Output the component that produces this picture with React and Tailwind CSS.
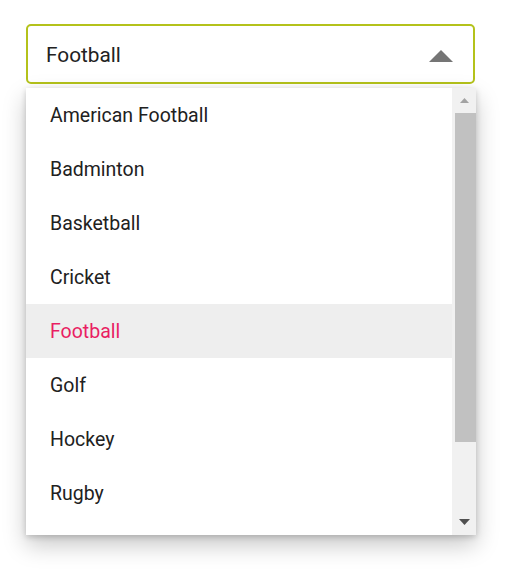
import React from 'react';

const sports = ['American Football', 'Badminton', 'Basketball', 'Cricket', 'Football', 'Golf', 'Hockey', 'Rugby'];

export default function App() {
  const selected = 'Football';

  return (
    <div className="w-[508px] h-[577px] bg-white font-['Roboto',sans-serif] pt-6 pl-[26px]">
      {/* Input */}
      <div className="w-[449px] h-[60px] border-2 border-[#b4c21b] rounded-[5px] flex items-center pl-[18px] pr-5 justify-between">
        <span className="text-[20.8px] text-[#222] mt-[3px]">{selected}</span>
        <svg width="24" height="12" viewBox="0 0 24 12" className="mt-[3px]">
          <polygon points="0,12 12,0 24,12" fill="#757575" />
        </svg>
      </div>

      {/* Popup */}
      <div className="mt-1 w-[450px] h-[447px] bg-white flex shadow-[0_10px_22px_rgba(0,0,0,0.22),0_2px_6px_rgba(0,0,0,0.18)] relative">
        <ul className="flex-1 overflow-hidden">
          {sports.map((s) => (
            <li
              key={s}
              className={
                s === selected
                  ? 'h-[54px] flex items-center pl-6 pt-[2px] text-[19.5px] bg-[#eeeeee] text-[#e91e63]'
                  : 'h-[54px] flex items-center pl-6 pt-[2px] text-[19.5px] text-[#212121]'
              }
            >
              {s}
            </li>
          ))}
        </ul>
        {/* Scrollbar */}
        <div className="w-[24px] bg-[#f1f1f1] flex flex-col items-center">
          <div className="h-[25px] w-full flex items-center justify-center">
            <svg width="9" height="5" viewBox="0 0 9 5">
              <polygon points="0,5 4.5,0 9,5" fill="#a3a3a3" />
            </svg>
          </div>
          <div className="ml-[2px] w-[21px] h-[329px] bg-[#c1c1c1]" />
          <div className="flex-1" />
          <div className="h-[22px] w-full flex items-start justify-center pt-[6px]">
            <svg width="11" height="6" viewBox="0 0 11 6">
              <polygon points="0,0 11,0 5.5,6" fill="#505050" />
            </svg>
          </div>
        </div>
      </div>
    </div>
  );
}
